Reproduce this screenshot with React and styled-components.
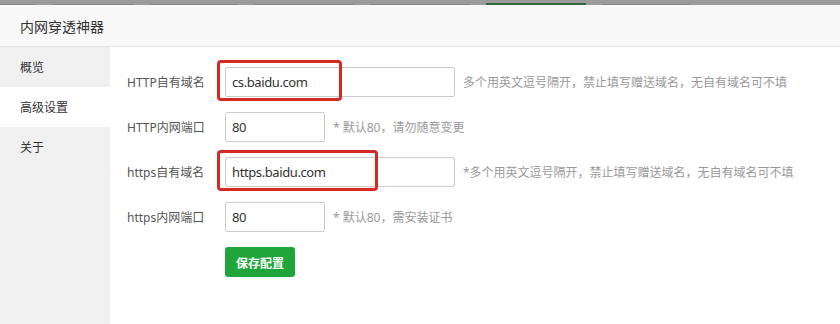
import React from 'react'
import styled, { createGlobalStyle } from 'styled-components'

const GlobalStyle = createGlobalStyle`
  html, body {
    margin: 0;
    padding: 0;
    background: #fff;
  }
  body {
    font-family: "Noto Sans", "Noto Sans CJK SC", sans-serif;
    color: #333;
  }
`

const fields = [
  { label: 'HTTP自有域名', value: 'cs.baidu.com', wide: true, hint: '多个用英文逗号隔开，禁止填写赠送域名，无自有域名可不填', mark: 125 },
  { label: 'HTTP内网端口', value: '80', hint: '* 默认80，请勿随意变更' },
  { label: 'https自有域名', value: 'https.baidu.com', wide: true, hint: '*多个用英文逗号隔开，禁止填写赠送域名，无自有域名可不填', mark: 161 },
  { label: 'https内网端口', value: '80', hint: '* 默认80，需安装证书' },
]

function App() {
  return (
    <Page>
      <GlobalStyle />
      <TopStrip>
        <Seg $w={36} />
        <Seg $w={82} />
        <Seg $w={88} />
        <Seg $w={100} />
        <Seg $w={100} />
        <Seg $w={100} $active />
        <Seg $w={88} />
      </TopStrip>
      <TitleBar>内网穿透神器</TitleBar>
      <Body>
        <Sidebar>
          <NavItem>概览</NavItem>
          <NavItem $active>高级设置</NavItem>
          <NavItem>关于</NavItem>
        </Sidebar>
        <Content>
          {fields.map((f) => (
            <Row key={f.label}>
              <Label>{f.label}</Label>
              <InputWrap $mark={f.mark}>
                <Input $wide={f.wide} defaultValue={f.value} />
              </InputWrap>
              <Hint>{f.hint}</Hint>
            </Row>
          ))}
          <Row>
            <Label />
            <SaveButton>保存配置</SaveButton>
          </Row>
        </Content>
      </Body>
    </Page>
  )
}

export default App

const Page = styled.div`
  width: 840px;
  height: 324px;
  display: flex;
  flex-direction: column;
  overflow: hidden;
`

const TopStrip = styled.div`
  height: 5px;
  background: #9b9b9b;
  display: flex;
  align-items: flex-end;
  gap: 16px;
  flex-shrink: 0;
`

const Seg = styled.div`
  width: ${(p) => p.$w}px;
  height: ${(p) => (p.$active ? 2 : 1)}px;
  background: ${(p) => (p.$active ? '#2f6a3a' : '#858585')};
`

const TitleBar = styled.div`
  height: 41px;
  flex-shrink: 0;
  display: flex;
  align-items: center;
  padding-left: 20px;
  background: #f8f8f8;
  border-bottom: 1px solid #e6e6e6;
  font-size: 14px;
  color: #333;
`

const Body = styled.div`
  flex: 1;
  display: flex;
`

const Sidebar = styled.div`
  width: 110px;
  background: #f0f0f0;
  flex-shrink: 0;
`

const NavItem = styled.div`
  height: 40px;
  display: flex;
  align-items: center;
  padding-left: 20px;
  font-size: 12px;
  color: #333;
  background: ${(p) => (p.$active ? '#fff' : 'transparent')};
`

const Content = styled.div`
  flex: 1;
  padding: 20px 0 0 17px;
  display: flex;
  flex-direction: column;
  gap: 15px;
`

const Row = styled.div`
  display: flex;
  align-items: center;
  height: 30px;
`

const Label = styled.div`
  width: 98px;
  flex-shrink: 0;
  font-size: 12px;
  color: #555;
`

const InputWrap = styled.div`
  position: relative;
  display: flex;
  &::after {
    content: '';
    display: ${(p) => (p.$mark ? 'block' : 'none')};
    position: absolute;
    left: -8px;
    top: -7px;
    width: ${(p) => p.$mark || 0}px;
    height: 41px;
    box-sizing: border-box;
    border: 3px solid #d32a26;
    border-radius: 4px;
    pointer-events: none;
  }
`

const Input = styled.input`
  width: ${(p) => (p.$wide ? 230 : 100)}px;
  height: 30px;
  box-sizing: border-box;
  border: 1px solid #ccc;
  border-radius: 2px;
  padding: 0 6px;
  font-family: "Noto Sans", "Noto Sans CJK SC", sans-serif;
  font-size: 13px;
  letter-spacing: -0.4px;
  color: #333;
  outline: none;
  background: #fff;
`

const Hint = styled.div`
  margin-left: 8px;
  font-size: 12px;
  color: #999;
  white-space: nowrap;
`

const SaveButton = styled.button`
  width: 70px;
  height: 30px;
  border: none;
  border-radius: 3px;
  background: #20a53a;
  color: #fff;
  font-family: "Noto Sans CJK SC", sans-serif;
  font-size: 12px;
  font-weight: bold;
  padding: 0;
`
